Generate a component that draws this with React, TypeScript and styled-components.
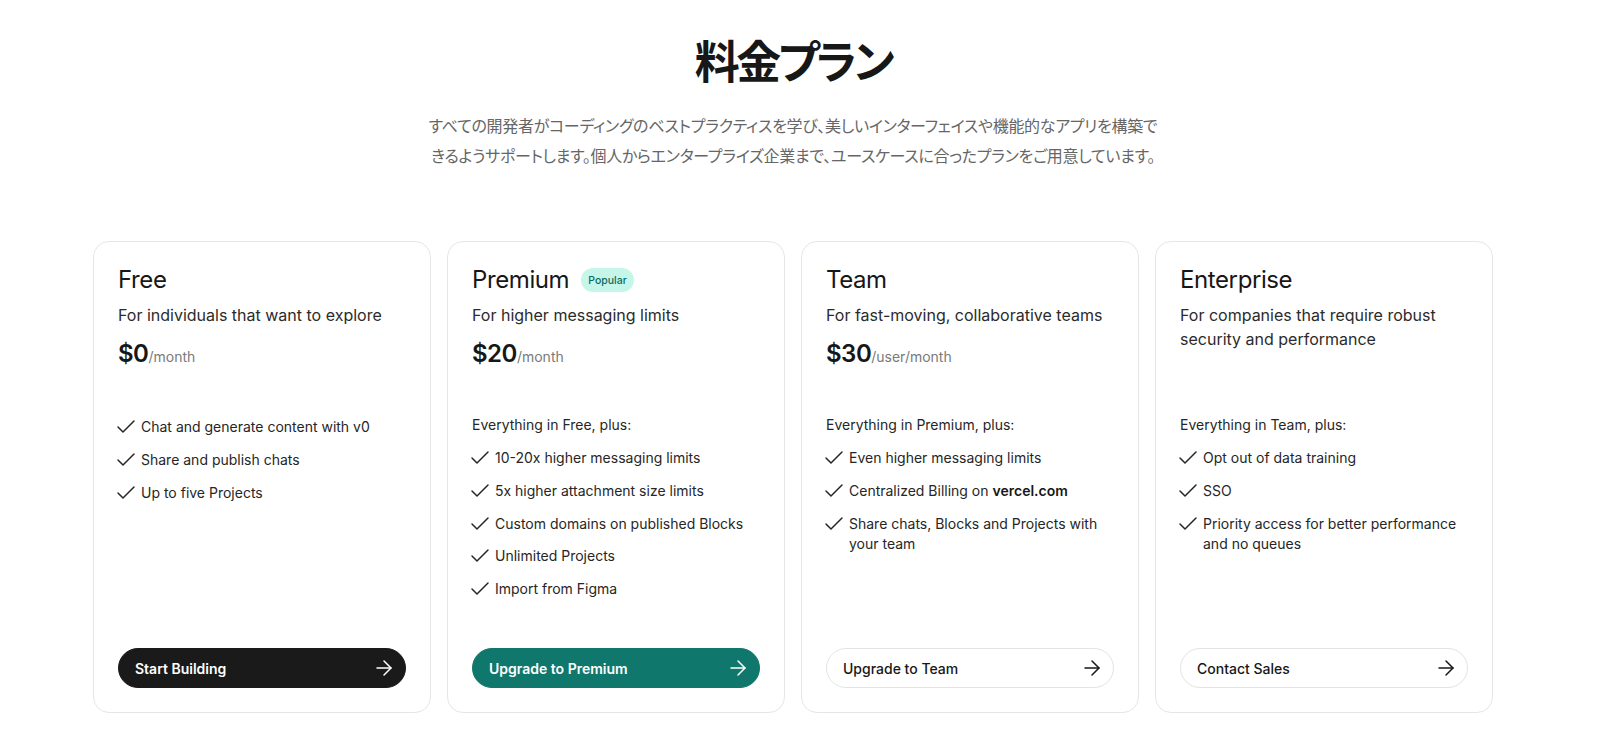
import React from 'react';
import styled, { createGlobalStyle } from 'styled-components';
import { Check, ArrowRight } from 'lucide-react';

const GlobalStyle = createGlobalStyle`
  * { box-sizing: border-box; }
  body {
    margin: 0;
    background: #ffffff;
    color: #171717;
    font-family: Inter, "Noto Sans CJK JP", sans-serif;
    -webkit-font-smoothing: antialiased;
  }
`;

const Page = styled.main`
  padding: 33px 20px 40px 0;
`;

const Hero = styled.header`
  display: flex;
  flex-direction: column;
  align-items: center;
  text-align: center;
`;

const Title = styled.h1`
  margin: 0;
  font-family: "Noto Sans CJK JP", sans-serif;
  font-feature-settings: "palt";
  font-size: 45px;
  line-height: 1.2;
  font-weight: 700;
  letter-spacing: -3.5px;
  color: #171717;
`;

const Subtitle = styled.p`
  margin: 24px 0 0;
  max-width: 740px;
  font-family: "Noto Sans CJK JP", sans-serif;
  font-feature-settings: "palt";
  font-size: 16px;
  line-height: 29.5px;
  color: #666666;
  letter-spacing: -0.3px;
`;

const Grid = styled.section`
  max-width: 1400px;
  margin: 71px auto 0;
  display: grid;
  grid-template-columns: repeat(4, 1fr);
  gap: 16px;
`;

const Card = styled.article`
  display: flex;
  flex-direction: column;
  height: 472px;
  padding: 24px;
  border: 1px solid #e6e6e6;
  border-radius: 16px;
  background: #fff;
`;

const CardHeader = styled.div`
  height: 149px;
`;

const NameRow = styled.div`
  display: flex;
  align-items: center;
  gap: 12px;
`;

const PlanName = styled.h2`
  margin: 0;
  font-size: 24px;
  line-height: 28px;
  font-weight: 400;
  letter-spacing: -0.4px;
  color: #171717;
`;

const Badge = styled.span`
  display: inline-flex;
  align-items: center;
  height: 24px;
  padding: 0 7px;
  border-radius: 999px;
  background: #c6f6ea;
  color: #0d6b5f;
  font-size: 10.5px;
  font-weight: 500;
`;

const Description = styled.p`
  margin: 9px 0 0;
  font-size: 16px;
  line-height: 24px;
  color: #2b2b2b;
`;

const Price = styled.div`
  margin-top: 11px;
  display: flex;
  align-items: baseline;
`;

const Amount = styled.span`
  font-size: 24px;
  line-height: 32px;
  font-weight: 600;
  letter-spacing: -0.5px;
  color: #171717;
`;

const Period = styled.span`
  font-size: 14px;
  color: #7a7a7a;
`;

const FeatureLabel = styled.p`
  margin: 0 0 13px;
  font-size: 14px;
  line-height: 20px;
  color: #262626;
`;

const FeatureList = styled.ul`
  list-style: none;
  margin: 0;
  padding: 0;
  display: flex;
  flex-direction: column;
  gap: 12.8px;
`;

const FeatureItem = styled.li`
  display: flex;
  align-items: flex-start;
  gap: 3px;
  font-size: 14px;
  line-height: 20px;
  color: #262626;

  svg {
    flex-shrink: 0;
    margin: -2px 0 -2px -4px;
  }

  b {
    font-weight: 600;
    color: #171717;
  }
`;

type Variant = 'dark' | 'teal' | 'outline';

const Button = styled.button<{ $variant: Variant }>`
  margin-top: auto;
  display: flex;
  align-items: center;
  justify-content: space-between;
  width: 100%;
  height: 40px;
  padding: 0 9px 0 16px;
  border-radius: 999px;
  font-family: Inter, sans-serif;
  font-size: 14px;
  cursor: pointer;
  border: 1px solid
    ${({ $variant }) =>
      $variant === 'outline' ? '#e3e3e3' : $variant === 'teal' ? '#10776c' : '#1a1a1a'};
  background: ${({ $variant }) =>
    $variant === 'outline' ? '#ffffff' : $variant === 'teal' ? '#10776c' : '#1a1a1a'};
  color: ${({ $variant }) => ($variant === 'outline' ? '#171717' : '#ffffff')};
  font-weight: ${({ $variant }) => ($variant === 'outline' ? 500 : 600)};
`;

interface Plan {
  name: string;
  popular?: boolean;
  description: string;
  price?: string;
  period?: string;
  label?: string;
  features: React.ReactNode[];
  cta: string;
  variant: Variant;
}

const plans: Plan[] = [
  {
    name: 'Free',
    description: 'For individuals that want to explore',
    price: '$0',
    period: '/month',
    features: ['Chat and generate content with v0', 'Share and publish chats', 'Up to five Projects'],
    cta: 'Start Building',
    variant: 'dark',
  },
  {
    name: 'Premium',
    popular: true,
    description: 'For higher messaging limits',
    price: '$20',
    period: '/month',
    label: 'Everything in Free, plus:',
    features: [
      '10-20x higher messaging limits',
      '5x higher attachment size limits',
      'Custom domains on published Blocks',
      'Unlimited Projects',
      'Import from Figma',
    ],
    cta: 'Upgrade to Premium',
    variant: 'teal',
  },
  {
    name: 'Team',
    description: 'For fast-moving, collaborative teams',
    price: '$30',
    period: '/user/month',
    label: 'Everything in Premium, plus:',
    features: [
      'Even higher messaging limits',
      <>
        Centralized Billing on <b>vercel.com</b>
      </>,
      'Share chats, Blocks and Projects with your team',
    ],
    cta: 'Upgrade to Team',
    variant: 'outline',
  },
  {
    name: 'Enterprise',
    description: 'For companies that require robust security and performance',
    label: 'Everything in Team, plus:',
    features: ['Opt out of data training', 'SSO', 'Priority access for better performance and no queues'],
    cta: 'Contact Sales',
    variant: 'outline',
  },
];

const PlanCard: React.FC<{ plan: Plan }> = ({ plan }) => (
  <Card>
    <CardHeader>
      <NameRow>
        <PlanName>{plan.name}</PlanName>
        {plan.popular && <Badge>Popular</Badge>}
      </NameRow>
      <Description>{plan.description}</Description>
      {plan.price && (
        <Price>
          <Amount>{plan.price}</Amount>
          <Period>{plan.period}</Period>
        </Price>
      )}
    </CardHeader>
    {plan.label && <FeatureLabel>{plan.label}</FeatureLabel>}
    <FeatureList style={plan.label ? undefined : { marginTop: 2 }}>
      {plan.features.map((f, i) => (
        <FeatureItem key={i}>
          <Check size={24} strokeWidth={1.5} />
          <span>{f}</span>
        </FeatureItem>
      ))}
    </FeatureList>
    <Button $variant={plan.variant}>
      {plan.cta}
      <ArrowRight size={24} strokeWidth={1.5} />
    </Button>
  </Card>
);

export default function App() {
  return (
    <>
      <GlobalStyle />
      <Page>
        <Hero>
          <Title>料金プラン</Title>
          <Subtitle>
            すべての開発者がコーディングのベストプラクティスを学び、美しいインターフェイスや機能的なアプリを構築できるようサポートします。個人からエンタープライズ企業まで、ユースケースに合ったプランをご用意しています。
          </Subtitle>
        </Hero>
        <Grid>
          {plans.map((p) => (
            <PlanCard key={p.name} plan={p} />
          ))}
        </Grid>
      </Page>
    </>
  );
}
